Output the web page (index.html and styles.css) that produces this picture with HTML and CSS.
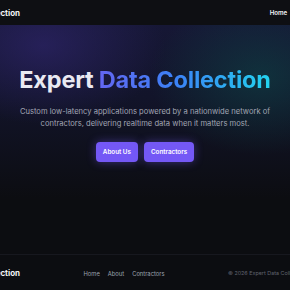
FILE: index.html
```html
<!DOCTYPE html>
<html lang="en">
<head>
    <meta charset="UTF-8">
    <meta name="viewport" content="width=device-width, initial-scale=1.0">
    <title>Expert Data Collection</title>
    <link rel="stylesheet" href="styles.css">
</head>
<body>
    <header class="site-header">
        <div class="bar">
            <span class="brand">Expert Data Collection</span>
            <nav class="nav">
                <a href="#">Home</a>
                <a href="#">About</a>
                <a href="#">Contractors</a>
            </nav>
        </div>
    </header>
    <section class="hero">
        <h1 class="hero-title">Expert <span class="accent">Data Collection</span></h1>
        <p class="hero-text">Custom low-latency applications powered by a nationwide network of contractors, delivering realtime data when it matters most.</p>
        <div class="hero-actions">
            <a class="btn" href="#">About Us</a>
            <a class="btn" href="#">Contractors</a>
        </div>
    </section>
    <footer class="site-footer">
        <div class="bar">
            <span class="brand">Expert Data Collection</span>
            <nav class="footer-links">
                <a href="#">Home</a>
                <a href="#">About</a>
                <a href="#">Contractors</a>
            </nav>
            <span class="copy">&copy; 2026 Expert Data Collection. All rights reserved.</span>
        </div>
    </footer>
</body>
</html>
```

FILE: styles.css
```css
html, body {
    margin: 0;
    padding: 0;
}
body {
    font-family: Inter, "Noto Sans", sans-serif;
    background-color: #0c0d11;
    color: #e5e7eb;
    overflow: hidden;
}
a {
    text-decoration: none;
    color: inherit;
}
.site-header,
.site-footer {
    display: flex;
    justify-content: center;
}
.bar {
    flex: 0 0 424px;
    display: flex;
    align-items: center;
    justify-content: space-between;
}
.site-header {
    height: 25px;
    background-color: #0e0f13;
}
.brand {
    font-weight: 700;
    font-size: 8px;
    color: #f3f4f6;
}
.nav {
    display: flex;
    gap: 8px;
    font-size: 6.2px;
    font-weight: 600;
    color: #f3f4f6;
}
.hero {
    height: 205px;
    display: flex;
    flex-direction: column;
    align-items: center;
    padding-top: 40px;
    box-sizing: border-box;
    text-align: center;
    background:
        radial-gradient(ellipse 60% 55% at 15% 10%, rgba(52, 40, 120, 0.55), transparent 70%),
        radial-gradient(ellipse 55% 55% at 90% 25%, rgba(14, 72, 72, 0.55), transparent 70%),
        linear-gradient(180deg, #161735 0%, #12142a 35%, #0c0d11 85%);
}
.hero-title {
    margin: 0;
    font-size: 23.5px;
    font-weight: 700;
    letter-spacing: -0.2px;
    color: #e9e9f2;
}
.accent {
    background: linear-gradient(90deg, #6366f1 0%, #3b82f6 45%, #22d3ee 100%);
    -webkit-background-clip: text;
    background-clip: text;
    color: transparent;
}
.hero-text {
    margin: 12px 0 0;
    width: 262px;
    font-size: 7.6px;
    line-height: 12px;
    color: #a1a5b3;
}
.hero-actions {
    display: flex;
    gap: 6px;
    margin-top: 12px;
}
.btn {
    padding: 6px 7px;
    border-radius: 4px;
    background-color: #7458f6;
    color: #fff;
    font-size: 6.3px;
    font-weight: 600;
    line-height: 8px;
    box-shadow: 0 0 10px rgba(116, 88, 246, 0.45);
}
.site-footer {
    margin-top: 24px;
    height: 36px;
    border-top: 1px solid #17181f;
}
.footer-links {
    display: flex;
    gap: 8px;
    font-size: 5.8px;
    color: #9ca3af;
}
.copy {
    font-size: 5.4px;
    color: #60646f;
}
```
